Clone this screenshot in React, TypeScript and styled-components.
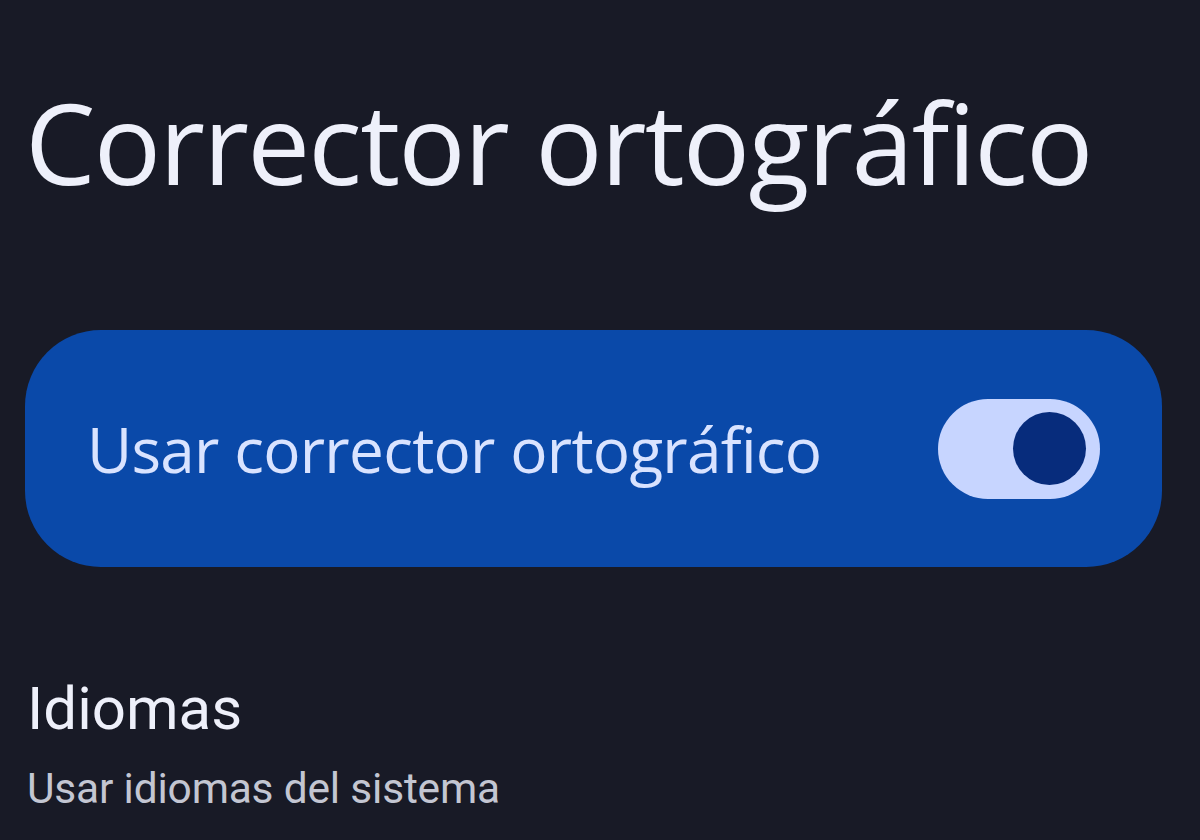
import styled, { createGlobalStyle } from "styled-components";

const GlobalStyle = createGlobalStyle`
    html, body {
        margin: 0;
        padding: 0;
        background: #181a26;
    }
    body {
        font-family: "Open Sans", "Noto Sans", sans-serif;
    }
`;

const Screen = styled.div`
    width: 1200px;
    height: 840px;
    box-sizing: border-box;
    background: #181a26;
    padding: 72px 38px 0 25px;
    display: flex;
    flex-direction: column;
    overflow: hidden;
`;

const Title = styled.h1`
    margin: 0;
    font-family: "Open Sans", sans-serif;
    font-weight: 400;
    font-size: 112px;
    line-height: 140px;
    letter-spacing: -1.8px;
    color: #eef0fa;
`;

const ToggleCard = styled.div`
    margin-top: 118px;
    height: 237px;
    border-radius: 76px;
    background: #0a49a9;
    display: flex;
    align-items: center;
    justify-content: space-between;
    padding: 0 62px;
`;

const CardLabel = styled.span`
    font-family: "Open Sans", sans-serif;
    font-size: 62px;
    font-weight: 400;
    letter-spacing: -0.7px;
    color: #d9e3ff;
`;

const Track = styled.div<{ $on: boolean }>`
    width: 162px;
    height: 100px;
    border-radius: 50px;
    background: ${(p) => (p.$on ? "#c7d5ff" : "#44475a")};
    display: flex;
    align-items: center;
    justify-content: ${(p) => (p.$on ? "flex-end" : "flex-start")};
    padding: 0 14px;
    box-sizing: border-box;
`;

const Thumb = styled.div`
    width: 73px;
    height: 73px;
    border-radius: 50%;
    background: #072c7c;
`;

const Section = styled.div`
    margin-top: 106px;
    padding-left: 2px;
    display: flex;
    flex-direction: column;
`;

const SectionTitle = styled.div`
    font-family: Roboto, sans-serif;
    font-size: 60px;
    line-height: 72px;
    color: #eef0fa;
`;

const SectionSub = styled.div`
    margin-top: 14px;
    font-family: Roboto, sans-serif;
    font-size: 42.5px;
    line-height: 60px;
    letter-spacing: -0.2px;
    color: #c3c6d2;
`;

export default function App() {
    return (
        <>
            <GlobalStyle />
            <Screen>
                <Title>Corrector ortográfico</Title>
                <ToggleCard>
                    <CardLabel>Usar corrector ortográfico</CardLabel>
                    <Track $on>
                        <Thumb />
                    </Track>
                </ToggleCard>
                <Section>
                    <SectionTitle>Idiomas</SectionTitle>
                    <SectionSub>Usar idiomas del sistema</SectionSub>
                </Section>
            </Screen>
        </>
    );
}
